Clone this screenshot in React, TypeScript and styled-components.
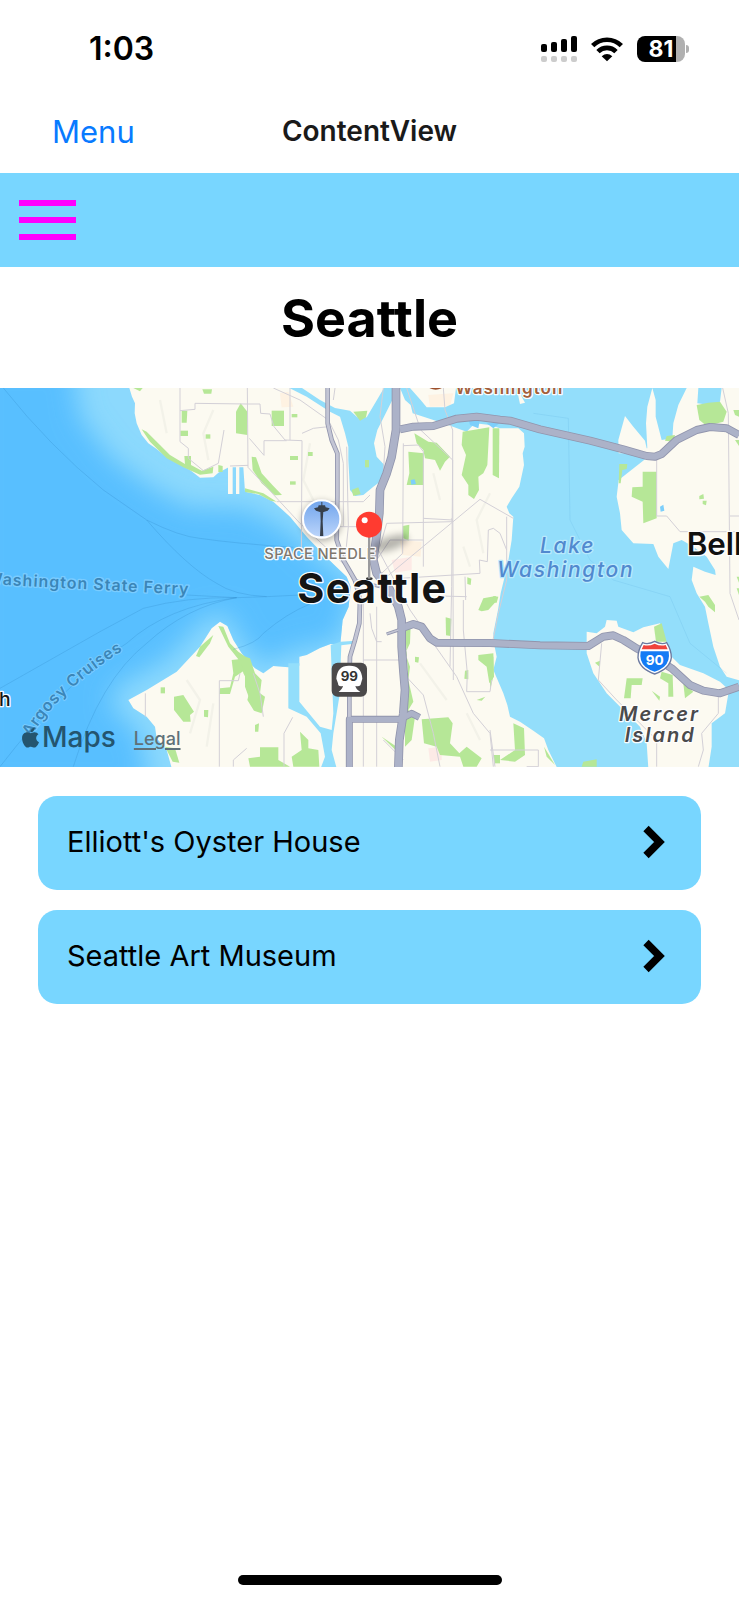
import React from 'react';
import styled, { createGlobalStyle } from 'styled-components';
import { FaApple } from 'react-icons/fa';

const sky = '#78d6ff';
const font = 'Inter, "Liberation Sans", sans-serif';

const GlobalStyle = createGlobalStyle`
  *, *::before, *::after { box-sizing: border-box; }
  body { margin: 0; background: #fff; color: #000; font-family: ${font}; }
  button { font-family: inherit; color: inherit; border: 0; background: none; padding: 0; cursor: pointer; }
`;

const Screen = styled.div`
  min-height: 100vh;
  display: flex;
  flex-direction: column;
  background: #fff;
`;

const StatusBar = styled.div`
  height: 98px;
  padding: 0 50px 0 89px;
  display: flex;
  align-items: center;
  justify-content: space-between;
`;

const Clock = styled.time`
  font-size: 32px;
  line-height: 40px;
  font-weight: 600;
`;

const StatusIcons = styled.div`
  display: flex;
  align-items: center;
  gap: 14px;
`;

const Battery = styled.div`
  display: flex;
  align-items: center;
  gap: 1px;
`;

const BatteryBody = styled.div<{ $level: number }>`
  width: 48px;
  height: 26px;
  border-radius: 8px;
  display: flex;
  align-items: center;
  justify-content: center;
  background: linear-gradient(to right, #000 ${p => p.$level}%, #b0b0b0 ${p => p.$level}%);
  color: #fff;
  font-size: 23px;
  line-height: 26px;
  font-weight: 700;
`;

const BatteryCap = styled.div`
  width: 3px;
  height: 8px;
  border-radius: 0 4px 4px 0;
  background: #b0b0b0;
`;

const NavBar = styled.header`
  height: 75px;
  padding: 0 52px 8px;
  display: grid;
  grid-template-columns: 1fr auto 1fr;
  align-items: center;
`;

const MenuButton = styled.button`
  && { color: #087aff; }
  justify-self: start;
  font-size: 31px;
  line-height: 40px;
`;

const NavTitle = styled.div`
  padding-bottom: 2px;
  font-size: 28px;
  line-height: 36px;
  font-weight: 600;
  color: #1a1a1a;
`;

const Toolbar = styled.div`
  height: 94px;
  padding: 0 19px;
  display: flex;
  align-items: center;
  background: ${sky};
`;

const Hamburger = styled.button`
  width: 57px;
  display: flex;
  flex-direction: column;
  gap: 11px;
`;

const Bar = styled.span`
  height: 6px;
  width: 100%;
  background: #f0f;
`;

const City = styled.h1`
  margin: 0;
  padding: 20px 0 37px;
  text-align: center;
  font-size: 52px;
  line-height: 64px;
  font-weight: 700;
`;

const MapFrame = styled.section`
  position: relative;
  overflow: hidden;
`;

const MapDrawing = styled.svg`
  display: block;
  width: 100%;
  height: auto;
  font-family: ${font};
`;

const Attribution = styled.div`
  position: absolute;
  left: 19px;
  bottom: 12px;
  display: flex;
  align-items: center;
  gap: 18px;
`;

const Brand = styled.span`
  display: flex;
  align-items: center;
  font-size: 28px;
  line-height: 36px;
  font-weight: 500;
  color: #24556f;
`;

const LegalLink = styled.a`
  padding-top: 4px;
  font-size: 18px;
  line-height: 24px;
  font-weight: 500;
  color: #5f7079;
  text-decoration: underline 2px;
  text-underline-offset: 3px;
`;

const PlaceList = styled.ul`
  margin: 0;
  padding: 29px 38px;
  list-style: none;
  display: flex;
  flex-direction: column;
  gap: 20px;
`;

const PlaceButton = styled.button`
  && { background: ${sky}; padding: 0 35px 2px 29px; }
  width: 100%;
  height: 94px;
  border-radius: 19px;
  display: flex;
  align-items: center;
  justify-content: space-between;
  font-size: 29px;
  line-height: 36px;
`;

const HomeIndicator = styled.div`
  width: 264px;
  height: 10px;
  margin: auto auto 15px;
  border-radius: 5px;
  background: #000;
`;

const Signal = () => (
  <svg width="37" height="28" viewBox="0 0 37 28" aria-label="Signal">
    {[9, 7, 4, 1].map((top, i) => (
      <g key={top}>
        <rect x={1 + i * 10} y={top} width="6" height={17 - top} rx="2" />
        <rect x={1 + i * 10} y="21" width="6" height="6" rx="2" fill="#ccc" />
      </g>
    ))}
  </svg>
);

const Wifi = () => (
  <svg width="32" height="26" viewBox="0 0 96 78" aria-label="Wi-Fi">
    <g fill="none" stroke="#000" strokeWidth="14">
      <path d="M5 29 A61 61 0 0 1 91 29" />
      <path d="M21 47 A38 38 0 0 1 75 47" />
    </g>
    <path d="M32 61 Q48 47 64 61 L48 76Z" />
  </svg>
);

const Chevron = () => (
  <svg width="23" height="34" viewBox="0 0 23 34" fill="none" stroke="#000" strokeWidth="7.5" aria-hidden="true">
    <path d="M3 3.5 L16.5 17 L3 30.5" />
  </svg>
);

const soundShape =
  'M-40 -20 L385 -20 388 24 396 50 405 70 404 100 410 130 425 165 445 190 470 207 500 232 530 248 570 270 600 293 640 292 655 278 686 262 730 262 735 335 780 345 820 365 870 410 920 470 960 512 1000 552 1040 590 1052 620 1046 680 1028 720 1022 783 1022 795 992 792 960 804 920 825 898 830 898 857 865 862 820 858 790 880 765 865 745 845 725 820 700 780 682 738 660 725 635 745 600 800 530 875 440 930 385 960 400 985 440 1010 465 1040 470 1075 500 1110 525 1200 -40 1200Z';

const soundDeep =
  'M-80 -60 L215 -60 240 110 330 230 450 320 560 380 740 385 860 450 960 540 1060 620 1030 750 1000 790 900 805 790 855 720 780 680 700 620 710 500 840 350 920 330 975 420 1060 450 1240 -80 1240Z';

const lakes = [
  // Lake Union and the ship canal
  'M868 24 L920 50 990 95 1020 110 1035 160 1045 200 1045 240 1050 330 1065 348 1090 345 1120 320 1147 300 1153 255 1130 230 1122 190 1132 150 1152 110 1177 60 1180 24 1152 24 1125 70 1100 112 1072 112 1050 92 1005 84 960 60 906 24Z',
  // Portage Bay and Lake Washington
  'M1200 24 L1215 60 1232 75 1238 100 1275 112 1330 130 1400 155 1425 130 1470 135 1500 145 1555 145 1572 160 1574 200 1568 220 1572 255 1558 320 1535 355 1520 380 1528 400 1540 410 1535 480 1522 560 1514 590 1502 640 1494 690 1480 760 1484 800 1490 830 1480 870 1510 940 1522 975 1530 1010 1560 1025 1600 1052 1632 1075 1645 1110 1672 1165 2217 1165 2217 24 1560 24 1565 50 1575 68 1560 72 1550 24 1368 24 1362 70 1335 82 1280 82 1262 60 1230 24Z',
  // West waterway
  'M865 850 L898 850 898 965 960 1040 995 1050 1000 1000 992 795 1022 785 1056 783 1056 792 1024 796 1018 950 1000 1060 995 1110 1010 1165 962 1165 975 1130 962 1060 920 1010 865 985Z',
];

const shores = [
  'M1958 220 L1856 220 1855 180 1875 108 1900 140 1935 182 1940 205 1942 205 1938 130 1942 80 1957 24 1967 60 1967 110 1985 180 2017 175 2020 130 2035 75 2060 24 2095 24 2092 70 2130 75 2160 65 2165 24 2230 24 2230 905 2180 890 2160 860 2140 800 2125 730 2115 680 2090 640 2075 600 2080 560 2115 575 2147 585 2145 570 2120 530 2080 500 2045 480 2020 490 2005 567 1975 530 1960 492 1900 490 1865 450 1860 400 1850 350 1856 300Z',
  'M1760 755 L1790 760 1815 740 1820 720 1850 722 1855 740 1900 757 1930 742 1980 730 2000 790 2015 830 2040 855 2110 880 2160 905 2187 930 2175 1000 2135 1030 2135 1100 2125 1165 1945 1165 1940 1090 1920 1040 1870 990 1820 940 1780 880 1760 820Z',
  'M684 255 L698 255 698 342 684 342Z',
  'M708 255 L718 255 718 342 708 342Z',
];

const parks = [
  'M425 148 L440 155 480 195 510 225 555 252 553 228 573 228 573 255 605 272 640 260 638 280 600 284 550 262 500 235 450 185Z',
  'M655 255 L668 258 668 276 655 276Z', 'M545 92 L562 92 560 128 545 128Z', 'M541 152 L564 152 564 168 541 168Z',
  'M400 24 L428 24 420 34Z', 'M607 28 L636 28 634 41 612 41Z', 'M708 95 L722 70 742 95 742 165 708 160Z',
  'M617 163 L631 163 631 176 617 176Z', 'M815 92 L852 92 852 138 815 138Z', 'M875 102 L892 102 892 112 875 112Z',
  'M755 230 L768 232 785 280 820 318 846 345 825 346 785 310 758 270Z', 'M870 228 L894 228 894 240 870 240Z',
  'M924 216 L938 216 938 228 924 228Z', 'M870 304 L887 304 887 314 870 314Z', 'M735 325 L790 340 830 365 812 362 775 342 735 336Z',
  'M1060 95 L1102 92 1098 112 1080 122Z', 'M1055 330 L1075 322 1082 342 1060 348Z', 'M1095 240 L1107 240 1107 262 1095 262Z',
  'M1225 215 L1272 220 1270 315 1220 315 1228 280Z', 'M1243 160 L1285 185 1310 188 1350 230 1335 245 1320 272 1305 240 1275 235 1270 210 1250 190Z',
  'M1388 155 L1468 142 1462 255 1450 280 1435 290 1437 330 1422 357 1405 345 1405 315 1385 285 1398 225 1385 195Z',
  'M1478 145 L1498 145 1497 295 1478 285Z', 'M1208 438 L1228 434 1226 482 1210 475Z', 'M1435 690 L1450 655 1487 648 1490 662 1465 690 1445 694Z',
  'M1480 648 L1495 650 1490 668 1480 668Z', 'M1337 712 L1354 716 1352 768 1338 766Z', 'M1402 592 L1414 596 1412 615 1402 612Z',
  'M1405 870 L1405 898 1393 896 1395 872Z', 'M1435 825 L1480 820 1482 890 1468 910 1460 860 1435 840Z', 'M1430 960 L1456 950 1445 962Z',
  'M1215 745 L1232 735 1230 790 1216 820 1230 860 1225 900 1240 965 1225 990 1245 1010 1235 1080 1215 1100 1215 1000 1225 900Z',
  'M1245 830 L1257 832 1255 848 1245 846Z', 'M1265 1018 L1345 1012 1358 1030 1350 1090 1378 1120 1400 1100 1445 1135 1430 1160 1390 1160 1380 1130 1320 1125 1310 1100 1272 1090Z',
  'M1145 1070 L1190 1100 1192 1115Z', 'M600 800 L640 765 630 790 598 832 588 828Z', 'M655 738 L670 740 690 790 715 815 750 840 755 975 735 920 735 870 705 890 690 942 658 942 660 925 690 922 700 880 695 840 715 838 685 800Z',
  'M522 950 L550 945 582 995 570 1005 572 1025 550 1025 522 990Z', 'M612 990 L625 990 624 1012 612 1010Z', 'M482 922 L495 922 495 940 482 940Z',
  'M495 1100 L525 1105 538 1148 518 1145Z', 'M720 825 L750 835 765 880 785 900 780 940 795 950 785 1000 762 992 742 960 752 920 730 880Z',
  'M745 1135 L780 1130 780 1102 835 1102 835 1140 870 1160 750 1160Z', 'M900 1055 L925 1080 925 1105 955 1110 958 1160 880 1160 875 1130 905 1110Z',
  'M765 1035 L777 1030 775 1055 765 1055Z', 'M1540 1030 L1572 1045 1575 1125 1545 1145 1500 1140 1545 1110Z', 'M1482 1125 L1500 1125 1500 1150 1482 1150Z',
  'M1632 1100 L1665 1155 1640 1130Z', 'M1750 1145 L1790 1138 1790 1160 1745 1160Z', 'M1470 830 L1480 830 1480 890 1470 930Z',
  'M1858 252 L1882 252 1880 267 1867 270 1862 310 1856 310Z', 'M1928 275 L1970 275 1970 415 1930 430 1928 365 1895 350 1897 322 1928 320Z',
  'M2090 75 L2125 68 2160 65 2180 95 2170 125 2120 138 2098 120Z', 'M1995 182 L2000 168 2025 165 2020 185Z', 'M2200 90 L2217 90 2217 110 2205 105Z', 'M2205 180 L2217 180 2217 198Z',
  'M2098 650 L2125 645 2145 675 2145 697 2125 680 2115 665Z', 'M1962 740 L1985 730 2000 785 1968 785Z', 'M1985 875 L2018 885 2020 950 2005 950 2005 910 1980 895Z',
  'M1880 895 L1928 895 1925 915 1895 915 1892 955 1872 955Z', 'M1955 932 L1980 950 1978 962Z', 'M2050 910 L2080 935 2055 955Z', 'M1785 848 L1800 842 1800 862Z',
  'M2098 348 L2110 342 2112 356 2098 358Z', 'M2108 362 L2120 362 2118 376 2108 372Z', 'M2210 590 L2217 590 2217 608Z', 'M2210 625 L2217 625 2217 645Z',
];

const streets = [
  'M540 24 L540 185 565 205 565 235 610 272 655 250 672 150', 'M540 92 L585 88 585 70 742 72', 'M742 24 L744 262 780 300 900 430 1040 560 1075 640',
  'M690 258 L744 256', 'M744 72 L780 72 782 100 810 102 822 140 855 180 906 182 904 520', 'M870 24 L870 180', 'M906 160 L940 145 985 140',
  'M792 226 L792 182 860 182', 'M748 175 L792 226', 'M830 365 L1090 365 1110 345', 'M975 440 L1080 440', 'M1040 200 L1045 440 1035 540',
  'M820 24 L900 60 985 120 1015 180 1030 250 1030 440', 'M1150 24 L1140 110 1155 200 1150 280', 'M1210 190 L1208 520 1145 580', 'M1210 197 L1255 195 1270 215 1270 560',
  'M1220 24 L1262 150 1358 240 1360 900', 'M1358 240 L1355 620 1350 860', 'M1140 500 L1160 430 1358 425 1354 415', 'M1130 540 L1170 480 1270 480', 'M1100 640 L1440 358',
  'M1200 595 L1440 580 1438 540 1462 545 1465 450 1480 445 1500 460 1520 510', 'M1270 415 L1358 420', 'M1440 358 L1540 415', 'M1320 648 L1400 650', 'M1395 590 L1397 660',
  'M1130 500 L1230 690 1370 890 1420 1000 1470 1060 1480 1160', 'M1200 870 L1270 945 1300 1060 1320 1160', 'M1090 670 L1090 1160', 'M1130 680 L1130 1160', 'M1090 840 L1205 840',
  'M1150 1080 L1210 1140', 'M1390 660 L1390 750 1402 880 1400 935 1470 935 1475 900', 'M1520 410 L1520 600 1495 700 1475 800', 'M436 940 L436 1010', 'M658 1160 L658 902 715 902 720 880',
  'M700 1160 L700 1140 740 1105', 'M760 880 L780 940 790 1010', 'M852 1160 L852 1060 878 1012', 'M1470 1110 L1615 1110 1615 1160 1580 1160', 'M1470 1050 L1485 1160',
  'M2168 24 L2185 100 2190 640 2217 720', 'M1970 235 L1970 408 2000 408 2040 455 2217 455', 'M2190 408 L2217 408', 'M1805 790 L1795 900 1850 960 1970 1080 1970 1160',
  'M2155 940 L2155 1000 2105 1060 2110 1110 2095 1160', 'M1330 24 L1335 90 1358 150 1358 240', 'M1110 700 L1115 745 1130 785 1145 785', 'M1000 60 L1005 24',
];

const ferries = [
  'M10 24 Q150 200 310 330 L440 420 Q540 470 600 475 Q700 490 880 502', 'M440 420 Q560 560 650 610 Q700 645 800 650 L900 645', 'M560 645 L710 653 800 650',
  'M0 925 L300 755 430 685 Q560 650 710 653', 'M0 1160 Q200 900 380 790 Q500 680 710 653', 'M220 1160 Q300 900 440 790 Q560 680 710 653',
  'M700 808 Q770 790 790 760 Q860 700 930 672', 'M1600 100 L1705 115 1710 420 1770 540 1840 600 2010 650 2070 790 2180 880',
];

const highways = [
  { w: 10, fill: '#c3c5d4', d: 'M983 24 L983 130 995 180 1012 220 1012 350 1010 480 1030 540 1065 600 1080 660 1078 730 1065 780 1050 830 1048 900 1048 1020' },
  { w: 6, fill: '#c3c5d4', d: 'M1060 600 L1140 620 M1160 762 L1210 745' },
  { w: 17, fill: '#acb2c8', d: 'M1048 1165 L1048 1018 1200 1018 1235 1000 1258 1012' },
  { w: 20, fill: '#acb2c8', d: 'M1200 148 L1240 140 1300 138 1370 116 1430 110 1500 119 1530 122 1620 148 1770 182 1870 208 1940 228 1965 230 1985 222 2030 180 2090 150 2130 141 2180 145 2217 165' },
  { w: 20, fill: '#acb2c8', d: 'M1205 745 L1240 732 1265 740 1290 775 1310 788 1470 789 1620 796 1765 798 1810 770 1840 766 1870 780 1910 805 1960 830 2015 865 2070 915 2110 932 2160 940 2217 920' },
  { w: 22, fill: '#acb2c8', d: 'M1188 24 L1188 150 1175 230 1160 280 1140 330 1138 400 1128 480 1120 540 1130 580 1170 630 1195 680 1205 720 1205 800 1210 870 1215 930 1210 1000 1198 1080 1195 1165' },
];

interface LabelProps {
  x: number;
  y: number;
  size: number;
  fill: string;
  weight?: number;
  track?: number;
  italic?: boolean;
  halo?: string;
  turn?: number;
  children: string;
}

const Label = ({ x, y, size, fill, weight = 600, track = 0, italic, halo = '#fffffff0', turn = 0, children }: LabelProps) => (
  <text
    x={x} y={y} fontSize={size} fill={fill} fontWeight={weight} letterSpacing={track}
    fontStyle={italic ? 'italic' : 'normal'} stroke={halo} strokeWidth="8" strokeLinejoin="round"
    paintOrder="stroke" transform={turn ? `rotate(${turn} ${x} ${y})` : undefined}
  >
    {children}
  </text>
);

const SeattleMap = () => (
  <MapDrawing viewBox="0 24 2217 1137" role="img" aria-label="Map of Seattle">
    <defs>
      <clipPath id="sound"><path d={soundShape} /></clipPath>
      <filter id="depth" x="-20%" y="-20%" width="140%" height="140%"><feGaussianBlur stdDeviation="38" /></filter>
      <filter id="soft" x="-50%" y="-100%" width="200%" height="300%"><feGaussianBlur stdDeviation="11" /></filter>
      <linearGradient id="needle" x1="0" y1="0" x2="0" y2="1">
        <stop offset="0" stopColor="#70a4ec" /><stop offset="1" stopColor="#bdd6fb" />
      </linearGradient>
      <path id="argosy" d="M92 1072 Q180 920 420 780" />
    </defs>
    <rect y="24" width="2217" height="1137" fill="#fcfaf1" />
    <g fill="#ffe9d3" opacity="0.5">
      <path d="M840 40 L865 35 880 80 845 82Z M1200 480 L1265 485 1262 530 1205 525Z M2150 430 L2210 432 2205 470 2150 465Z M1285 45 L1360 40 1350 78 1290 80Z" />
      <path d="M1175 540 L1235 530 1235 570 1185 578Z M1285 1105 L1325 1100 1325 1140 1290 1145Z" fill="#ffdcdc" />
    </g>
    <g fill="none" stroke="#f3f2e9" strokeWidth="7">
      <path d="M640 90 L610 160 625 240 M480 60 L500 160 M930 190 L910 300 950 380 M1300 280 L1320 360 M1470 340 L1430 420 1450 520 M1390 500 L1410 560 M560 900 L600 960 570 1060 M640 970 L620 1100 M1260 850 L1340 960 M1400 1000 L1440 1080 M2000 260 L2040 330 2010 420 M2110 180 L2140 280 M2140 620 L2180 760 M1840 850 L1880 940 M2000 1060 L2040 1120" />
    </g>
    <path d={soundShape} fill="#8cd9fd" />
    <g clipPath="url(#sound)">
      <path d={soundDeep} fill="#58bfff" filter="url(#depth)" />
    </g>
    {lakes.map(d => <path key={d} d={d} fill="#93defb" />)}
    {shores.map(d => <path key={d} d={d} fill="#fcfaf1" />)}
    {parks.map(d => <path key={d} d={d} fill="#b6e797" />)}
    <path d="M1405 115 L1440 118 1435 145 1410 135Z M1460 130 L1500 128 1480 145Z M1232 300 L1244 298 1248 312 1234 314Z M1980 380 L1990 374 1993 392 1982 395Z" fill="#7dcffb" />
    <g fill="none" stroke="#d3d0d7" strokeWidth="3" strokeLinejoin="round">
      {streets.map(d => <path key={d} d={d} />)}
    </g>
    <g fill="none" stroke="#2b83c2" strokeWidth="3">
      {ferries.map((d, i) => <path key={d} d={d} strokeOpacity={i === 7 ? 0.1 : 0.25} />)}
    </g>
    <g fill="none" strokeLinejoin="round">
      {highways.map(h => <path key={h.d} d={h.d} stroke="#9195ad" strokeWidth={h.w + 4} />)}
      {highways.map(h => <path key={h.d} d={h.d} stroke={h.fill} strokeWidth={h.w - 1} />)}
    </g>

    <Label x={-42} y={612} size={48} fill="#3b86b8" halo="#7accff" track={3} turn={3}>Washington State Ferry</Label>
    <text fontSize="48" fontWeight="600" fill="#3b86b8" letterSpacing="2" stroke="#7accff" strokeWidth="6" paintOrder="stroke">
      <textPath href="#argosy">Argosy Cruises</textPath>
    </text>
    <Label x={-3} y={978} size={58} fill="#161616" weight={500}>h</Label>
    <ellipse cx="1307" cy="18" rx="22" ry="11" fill="#9c4f2c" />
    <Label x={1366} y={42} size={51} fill="#a3603b" track={3}>Washington</Label>
    <Label x={1620} y={520} size={63} fill="#5189cf" weight={500} track={5} italic halo="#b9e9fc">Lake</Label>
    <Label x={1492} y={590} size={63} fill="#5189cf" weight={500} track={5} italic halo="#b9e9fc">Washington</Label>
    <Label x={2060} y={526} size={94} fill="#111">Bell</Label>
    <Label x={1857} y={1022} size={60} fill="#4a4a4c" track={6} italic>Mercer</Label>
    <Label x={1874} y={1087} size={60} fill="#4a4a4c" track={6} italic>Island</Label>

    <ellipse cx="1170" cy="490" rx="58" ry="20" fill="#000" opacity="0.28" filter="url(#soft)" transform="rotate(-18 1170 490)" />
    <circle cx="965" cy="423" r="60" fill="#000" opacity="0.3" filter="url(#soft)" />
    <circle cx="965" cy="417" r="56" fill="url(#needle)" stroke="#fff" strokeWidth="6" />
    <g fill="#37404c">
      <path d="M964 366 h3 v10 h8 l2 6 12 3 -6 7 -12 4 h-11 l-12 -4 -6 -7 12 -3 2 -6 h8Z" />
      <path d="M961 394 h9 l-2 30 2 44 h-10 l2 -44Z" />
    </g>
    <Label x={793} y={537} size={44} fill="#7f776e" weight={500} track={1}>SPACE NEEDLE</Label>
    <Label x={892} y={670} size={124} fill="#141414" weight={700} track={4}>Seattle</Label>
    <ellipse cx="1108" cy="596" rx="10" ry="4" fill="#333" />
    <rect x="1104" y="470" width="7" height="126" fill="#9b9b9d" />
    <circle cx="1107" cy="434" r="39" fill="#ff3b30" />
    <circle cx="1094" cy="421" r="9" fill="#fff" />

    <rect x="995" y="848" width="106" height="102" rx="18" fill="#4b494a" />
    <path d="M1016 936 Q1028 926 1029 918 Q1014 922 1014 910 L1009 896 Q1012 856 1048 857 Q1084 856 1087 896 L1083 910 Q1082 922 1066 918 Q1068 928 1081 936Z" fill="#fff" />
    <text x="1048" y="904" textAnchor="middle" fontSize="40" fontWeight="700" fill="#333">99</text>

    <path d="M1928 788 Q1944 795 1964 784 Q1984 795 2000 788 Q2014 810 2014 833 Q2010 866 1964 882 Q1918 866 1914 833 Q1914 810 1928 788Z" fill="#fff" stroke="#6c7aa0" strokeWidth="4" />
    <path d="M1922 814 H2006 Q2011 845 1992 860 Q1980 870 1964 875 Q1948 870 1936 860 Q1917 845 1922 814Z" fill="#147bf5" />
    <path d="M1931 795 Q1946 800 1964 791 Q1982 800 1997 795 L2003 808 H1925Z" fill="#f0443c" />
    <text x="1964" y="854" textAnchor="middle" fontSize="41" fontWeight="700" fill="#fff">90</text>
  </MapDrawing>
);

const places = ["Elliott's Oyster House", 'Seattle Art Museum'];

export default function App() {
  return (
    <Screen>
      <GlobalStyle />
      <StatusBar>
        <Clock>1:03</Clock>
        <StatusIcons>
          <Signal />
          <Wifi />
          <Battery>
            <BatteryBody $level={81}>81</BatteryBody>
            <BatteryCap />
          </Battery>
        </StatusIcons>
      </StatusBar>
      <NavBar>
        <MenuButton type="button">Menu</MenuButton>
        <NavTitle>ContentView</NavTitle>
      </NavBar>
      <Toolbar>
        <Hamburger type="button" aria-label="Open navigation">
          <Bar /><Bar /><Bar />
        </Hamburger>
      </Toolbar>
      <main>
        <City>Seattle</City>
        <MapFrame>
          <SeattleMap />
          <Attribution>
            <Brand><FaApple size={23} aria-label="Apple" />Maps</Brand>
            <LegalLink href="#legal">Legal</LegalLink>
          </Attribution>
        </MapFrame>
        <PlaceList>
          {places.map(name => (
            <li key={name}>
              <PlaceButton type="button">{name}<Chevron /></PlaceButton>
            </li>
          ))}
        </PlaceList>
      </main>
      <HomeIndicator />
    </Screen>
  );
}
